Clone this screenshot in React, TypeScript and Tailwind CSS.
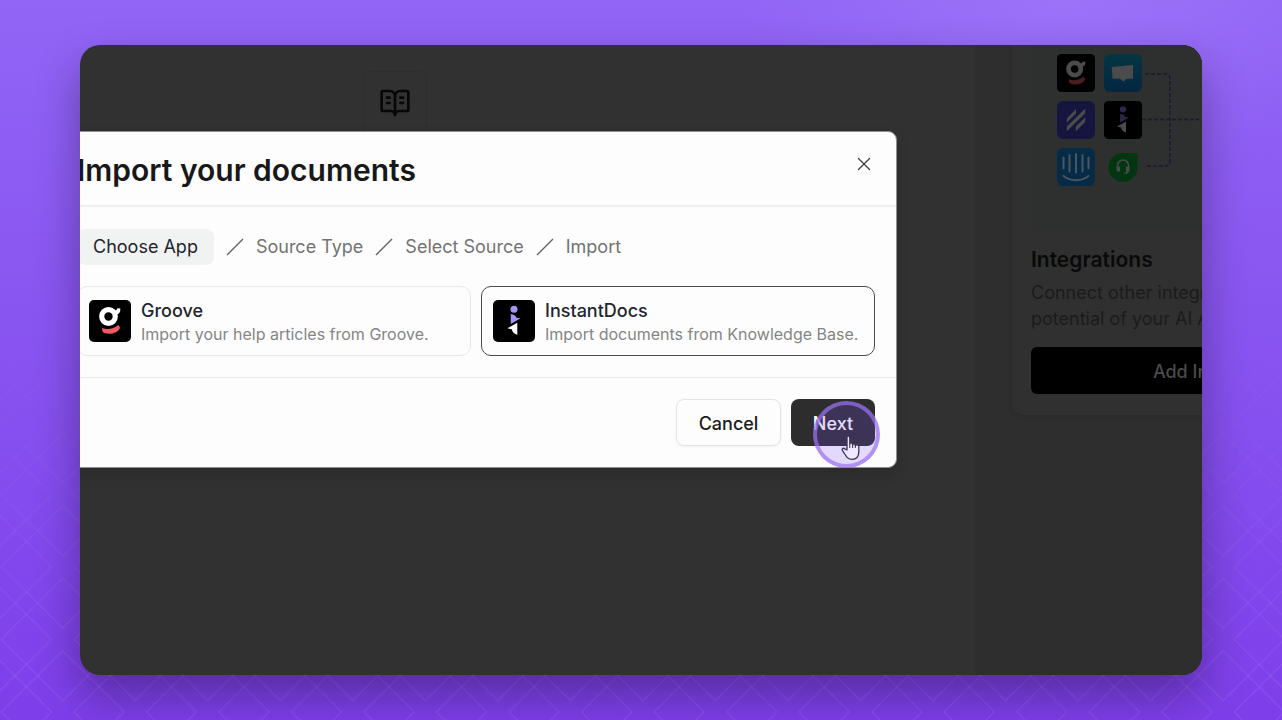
import React, { useState } from 'react';
import { BookOpenText, X } from 'lucide-react';

const steps = ['Choose App', 'Source Type', 'Select Source', 'Import'];

const apps = [
  { id: 'groove', name: 'Groove', text: 'Import your help articles from Groove.' },
  { id: 'instantdocs', name: 'InstantDocs', text: 'Import documents from Knowledge Base.' },
];

const GrooveLogo = ({ className, dim }: { className: string; dim?: boolean }) => (
  <svg viewBox="0 0 42 42" className={className}>
    <rect width="42" height="42" rx="5" fill="#000" />
    <circle cx="19.5" cy="16.5" r="6.8" fill="none" stroke={dim ? '#4b4b4b' : '#fff'} strokeWidth="5.2" />
    <path d="M23 11c2.500.5 4.500-.5 5.500-2.800l2.800.3c.3 4-1.500 6-5 6z" fill={dim ? '#4b4b4b' : '#fff'} />
    <path d="M13 28c5 2 12 1 16.500-3l1.500 2.500c-1 4-6 6.300-10.500 6.300-3.500 0-6.500-1-7-2.300z" fill={dim ? '#4a1d20' : '#ef5a5f'} />
  </svg>
);

const InstantDocsLogo = ({ className, dim }: { className: string; dim?: boolean }) => (
  <svg viewBox="0 0 42 42" className={className}>
    <rect width="42" height="42" rx="5" fill="#000" />
    <circle cx="21" cy="9.200" r="3.500" fill={dim ? '#2b2748' : '#a695f5'} />
    <path d="M17.800 14c3 .3 5 1.700 5.700 3.800l4 .4-9.700 5.800z" fill={dim ? '#2b2748' : '#a695f5'} />
    <path d="M24.300 22.700v12c-3-.5-5-2.500-5.500-5.400l-4.300-1z" fill={dim ? '#4b4b4b' : '#fff'} />
  </svg>
);

const ChatLogo = () => (
  <svg viewBox="0 0 38 38" className="size-[38px]">
    <defs>
      <linearGradient id="chat" x1="0" y1="0" x2="0" y2="1">
        <stop offset="0" stopColor="#043642" />
        <stop offset="1" stopColor="#042642" />
      </linearGradient>
    </defs>
    <rect width="38" height="38" rx="6" fill="url(#chat)" />
    <path d="M7.700 13L29 11v13.500l-7 .5-2.500 2.800L16 24.700l-7.500.1z" fill="#4b4b4b" />
  </svg>
);

const HelpScoutLogo = () => (
  <svg viewBox="0 0 38 38" className="size-[38px]">
    <rect width="38" height="38" rx="6" fill="#15153f" />
    <path
      d="M9.800 17.500l9.200-9.500v4.500l-9.200 9.200zM9.800 25.500l18.500-18v4.700l-18.500 18zM18.800 25.500l9.500-9.200v4.500l-9.500 9.400z"
      fill="#4b4b4b"
    />
  </svg>
);

const IntercomLogo = () => (
  <svg viewBox="0 0 38 38" className="size-[38px]">
    <rect width="38" height="38" rx="6" fill="#062b46" />
    <g fill="none" stroke="#4b5660" strokeWidth="2" strokeLinecap="round">
      <path d="M6.500 9.500v11M12.500 7v16.500M19 6v18.500M25.500 7v16.500M31.500 9.500v11M6.500 28c7 5.500 18 5.500 25 0" />
    </g>
  </svg>
);

const FreshdeskLogo = () => (
  <svg viewBox="0 0 38 38" className="size-[38px]">
    <path d="M19 5h12.500a2 2 0 0 1 2 2v12.500A14.500 14.500 0 1 1 19 5z" fill="#033510" />
    <path d="M13.500 20v-2.500a5.500 5.500 0 0 1 11 0V20M24.500 22c0 2-1 3-4 3.500" fill="none" stroke="#4b4b4b" strokeWidth="1.500" />
    <path d="M12.500 18.500h3.500v5h-2a1.500 1.500 0 0 1-1.500-1.500zM22 18.500h3.500V22a1.500 1.500 0 0 1-1.500 1.500h-2z" fill="#4b4b4b" />
  </svg>
);

// Diamond lattice that fades in towards the bottom of the page
const Lattice = () => (
  <svg aria-hidden="true" className="absolute inset-0 size-full">
    <defs>
      <pattern id="lattice" x="26.400" y="22.900" width="72.530" height="72.530" patternUnits="userSpaceOnUse">
        <g fill="none" stroke="#c4a5ff" strokeOpacity=".2">
          <path d="M36.265-25l61.300 61.265-61.300 61.265-61.300-61.265z" />
          <path d="M108.795-25l61.300 61.265-61.300 61.265-61.300-61.265z" />
          <path d="M-36.265-25l61.300 61.265-61.300 61.265-61.300-61.265z" />
          <path d="M36.265 47.500l61.300 61.265-61.300 61.265-61.300-61.265z" />
          <path d="M36.265-97.500l61.300 61.265-61.300 61.265-61.300-61.265z" />
        </g>
      </pattern>
      <linearGradient id="fade" x1="0" y1="0" x2="0" y2="1">
        <stop offset=".4" stopColor="#000" />
        <stop offset="1" stopColor="#fff" />
      </linearGradient>
      <radialGradient id="glow" cx=".83" cy="0" r=".25">
        <stop offset="0" stopColor="#b79bff" stopOpacity=".25" />
        <stop offset="1" stopColor="#b79bff" stopOpacity="0" />
      </radialGradient>
      <mask id="fadeMask">
        <rect width="100%" height="100%" fill="url(#fade)" />
      </mask>
    </defs>
    <rect width="100%" height="100%" fill="url(#glow)" />
    <rect width="100%" height="100%" fill="url(#lattice)" mask="url(#fadeMask)" />
  </svg>
);

const Pointer = () => (
  <span className="pointer-events-none absolute left-[22px] top-[2px] size-[67px] rounded-full border-4 border-[#9b74f0]/70 bg-[#7c4dff]/20">
    <svg viewBox="0 0 20 26" className="absolute left-6 top-[30px] h-[26px] w-5">
      <path
        d="M6 2.500c0-2 2.800-2 2.800 0v6.500c.2-1.600 2.700-1.600 2.800 0v.8c.3-1.400 2.600-1.300 2.700.3v.6c.4-1.200 3.500-1.300 3.500.8v5.300c0 5-3 7.500-6.800 7.500-3.500 0-5.200-1.600-6.600-4.300l-3-4.700c-.8-1.600 1-2.700 2.300-1.500L6 15z"
        fill="#efe8ff"
        stroke="#3a3050"
        strokeWidth="1.300"
        strokeLinejoin="round"
      />
      <path d="M8.800 9v4M11.600 9.500V13M14.300 10.500V13" stroke="#3a3050" />
    </svg>
  </span>
);

const IntegrationsCard = () => (
  <section className="w-[424px] shrink-0 rounded-b-xl bg-[#303030] px-[19px] pb-[21px] shadow-[0_1px_3px_#2b2b2b]">
    <div className="flex h-[185px] rounded-b-md bg-[#2d302f] pl-[26px] pt-[9px]">
      <div className="grid auto-rows-[38px] grid-cols-[38px_38px] gap-[9px]">
        <GrooveLogo className="size-[38px]" dim />
        <ChatLogo />
        <HelpScoutLogo />
        <InstantDocsLogo className="size-[38px]" dim />
        <IntercomLogo />
        <FreshdeskLogo />
      </div>
      <svg viewBox="0 0 58 132" className="h-[132px] w-[58px]">
        <path
          d="M3 20h20q5 0 5 5v82q0 5-5 5H3M0 65.500h57"
          fill="none"
          stroke="#1c1733"
          strokeWidth="1.500"
          strokeDasharray="4 2"
        />
      </svg>
    </div>
    <h2 className="mt-4 text-[21px] font-semibold leading-7 text-[#090909]">Integrations</h2>
    <p className="mt-[6px] whitespace-nowrap text-[18px] leading-[26px] text-[#1b1b1b]">
      Connect other integrations and unlock the
      <br />
      potential of your AI Agent.
    </p>
    <button className="mt-[15px] h-[47px] w-full rounded-md bg-black pt-px text-[18px] font-medium text-[#4a4a4a]">
      Add Integrations
    </button>
  </section>
);

const ImportDialog = () => {
  const [selected, setSelected] = useState('instantdocs');

  return (
    <div
      role="dialog"
      aria-labelledby="import-title"
      className="-ml-[25px] w-full max-w-[842px] rounded-[9px] border border-[#8f8f8f] bg-[#fdfdfd] shadow-[0_6px_14px_#00000022]"
    >
      <header className="flex h-[75px] items-center justify-between border-b-2 border-[#efefef] px-[21px] pt-[3px]">
        <h1 id="import-title" className="text-[30px] font-semibold leading-10 text-[#18181b]">
          Import your documents
        </h1>
        <button aria-label="Close" className="-mt-3 text-[#444]">
          <X size={22} strokeWidth={1.5} />
        </button>
      </header>

      <div className="px-[21px] pb-[21px] pt-[22px]">
        <ol className="flex h-9 items-center text-[18px] text-[#737373]">
          {steps.map((step, index) => (
            <li key={step} className="flex items-center">
              {index > 0 && (
                <svg viewBox="0 0 18 18" className="mx-3 size-[18px]">
                  <path d="M1 17L17 1" stroke="#666" strokeWidth="1.500" />
                </svg>
              )}
              <span className={index === 0 ? 'rounded-lg bg-[#f1f3f3] px-4 py-1 leading-7 text-[#22252f]' : 'leading-7'}>
                {step}
              </span>
            </li>
          ))}
        </ol>

        <div className="mt-[21px] grid grid-cols-2 gap-[10px]">
          {apps.map((app) => (
            <button
              key={app.id}
              onClick={() => setSelected(app.id)}
              className={`flex h-[70px] items-center gap-[10px] rounded-[10px] border px-[11px] text-left ${
                selected === app.id ? 'border-[#4a4a4a]' : 'border-[#e8e8e8]'
              }`}
            >
              {app.id === 'groove' ? (
                <GrooveLogo className="size-[42px] shrink-0" />
              ) : (
                <InstantDocsLogo className="size-[42px] shrink-0" />
              )}
              <span className="whitespace-nowrap pt-[2px]">
                <span className="block text-[18px] font-medium leading-6 text-[#22252f]">{app.name}</span>
                <span className="block text-[16px] leading-[22px] text-[#858585]">{app.text}</span>
              </span>
            </button>
          ))}
        </div>
      </div>

      <footer className="flex justify-end gap-[10px] border-t border-[#eaeaea] px-[21px] py-[21px] text-[18px] font-medium">
        <button className="h-[47px] w-[105px] rounded-lg border border-[#e4e4e4] pt-px text-[#1b1b1b] shadow-xs">
          Cancel
        </button>
        <button className="relative h-[47px] w-[84px] rounded-lg bg-[#2d2d2d] pt-px text-white">
          Next
          <Pointer />
        </button>
      </footer>
    </div>
  );
};

const App: React.FC = () => {
  return (
    <div className="relative flex min-h-screen bg-linear-to-b from-[#9265f6] to-[#7e3eea] px-20 py-[45px] font-['Inter',sans-serif]">
      <Lattice />

      <main className="relative flex flex-1 rounded-[20px] shadow-[0_20px_45px_#00000055]">
        <div className="relative flex flex-1 justify-between overflow-hidden rounded-[20px] bg-[#313131]">
          <div className="ml-[283px] mt-[26px] flex size-16 items-center justify-center rounded-lg border border-[#2d2d2d] text-[#070707]">
            <BookOpenText size={32} />
          </div>

          <aside className="flex w-[227px] items-start overflow-hidden bg-[#2e2e2e] pl-[37px]">
            <IntegrationsCard />
          </aside>

          <div className="absolute inset-x-0 top-0 pt-[86px]">
            <ImportDialog />
          </div>
        </div>
      </main>
    </div>
  );
};

export default App;
